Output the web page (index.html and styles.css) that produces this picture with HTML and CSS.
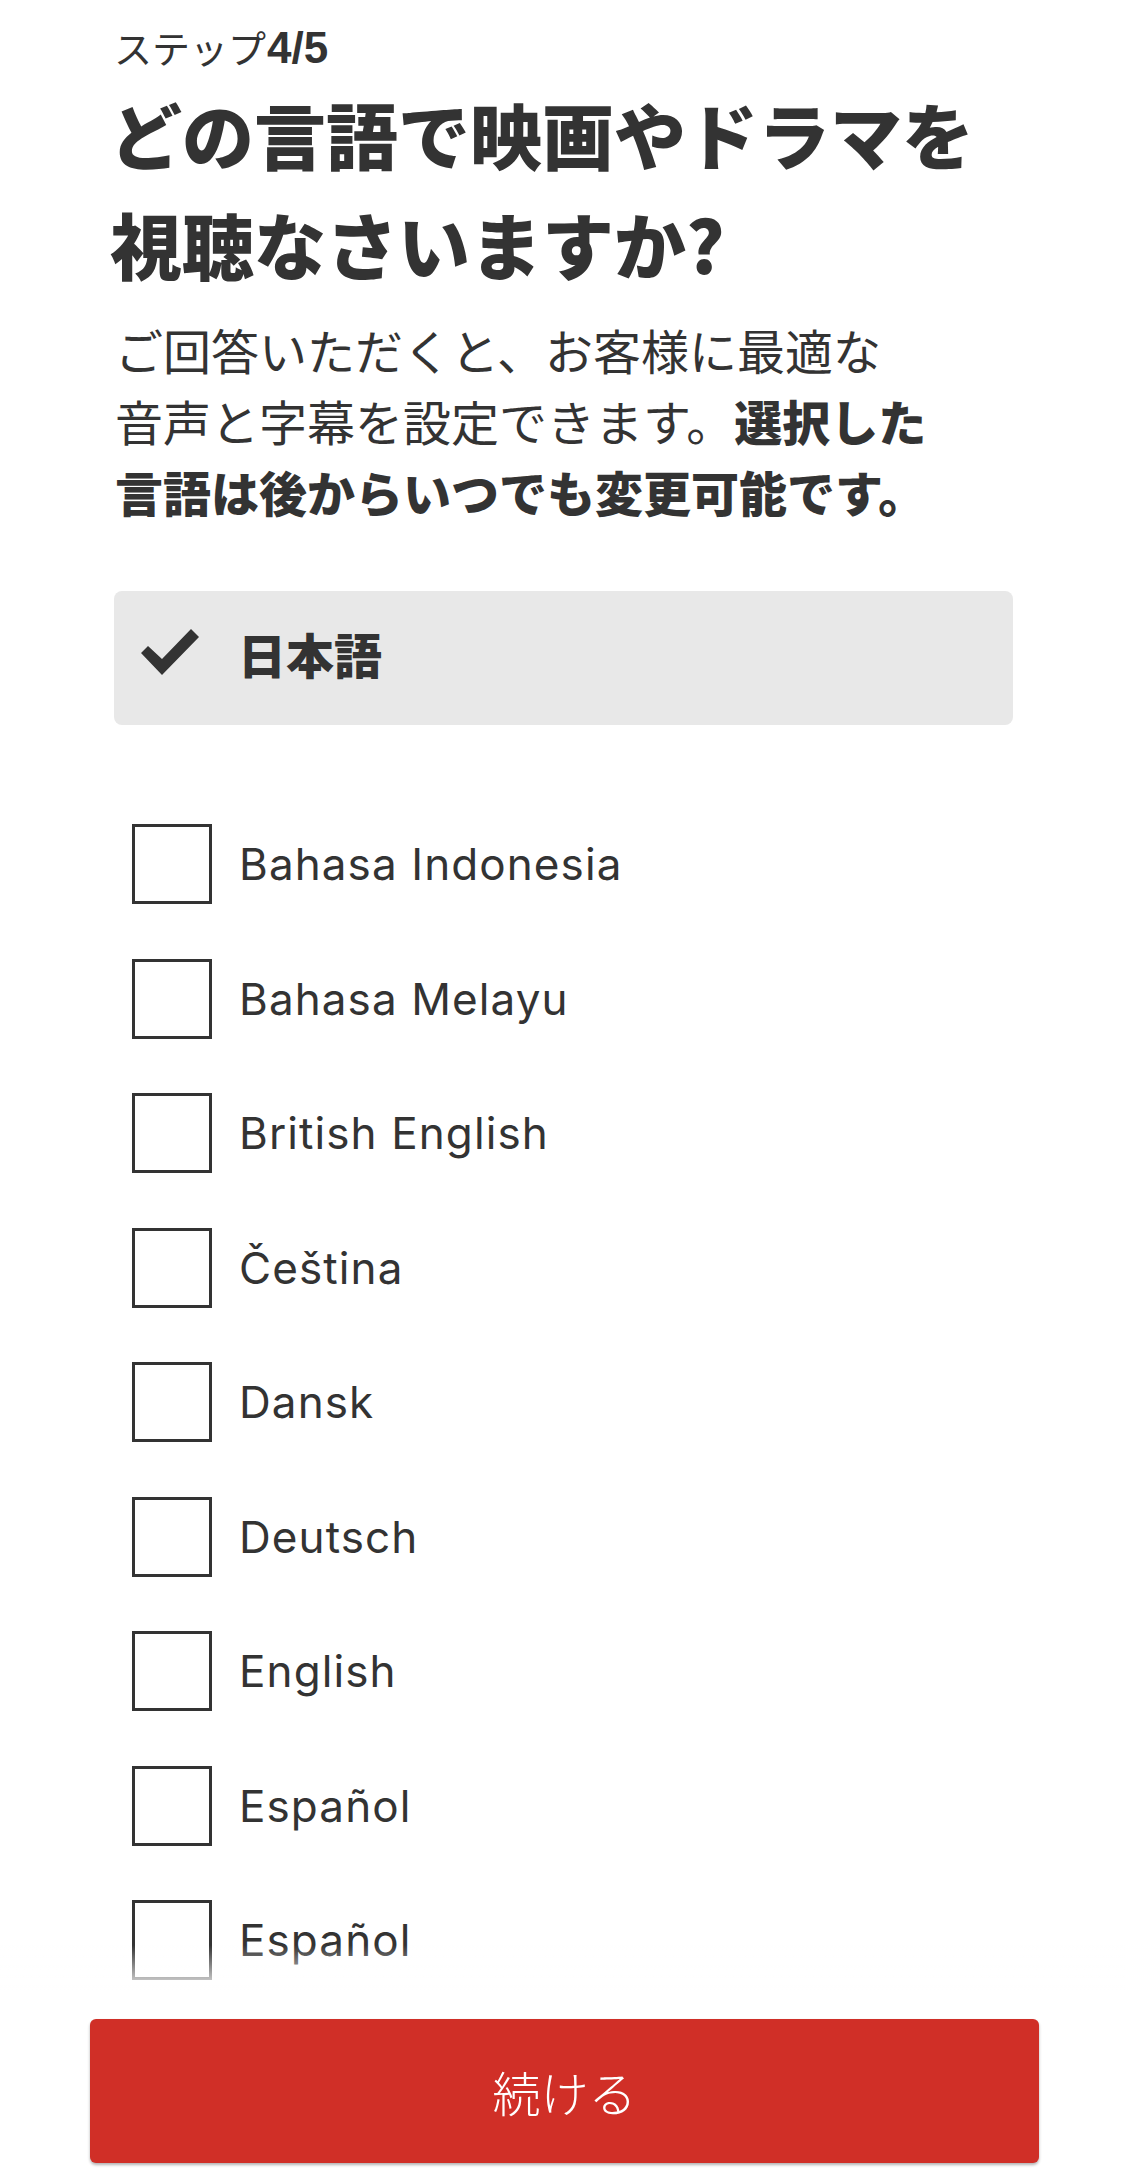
FILE: index.html
```html
<!DOCTYPE html>
<html lang="ja">
<head>
<meta charset="utf-8">
<title>言語の選択</title>
<link rel="stylesheet" href="styles.css">
</head>
<body>
<main class="page">
  <p class="step">ステップ<b>4/5</b></p>
  <h1 class="title">どの言語で映画やドラマを<br>視聴なさいますか?</h1>
  <p class="desc">ご回答いただくと、お客様に最適な<br>音声と字幕を設定できます。<strong>選択した<br>言語は後からいつでも変更可能です。</strong></p>

  <div class="selected">
    <svg class="check" viewBox="0 0 60 48" width="60" height="48" aria-hidden="true">
      <polygon points="1,25 8,18 22,31 51,1 59,9 22,47" fill="#333"/>
    </svg>
    <span class="selected-label">日本語</span>
  </div>

  <ul class="langs">
    <li class="lang"><span class="box"></span><span class="lang-name">Bahasa Indonesia</span></li>
    <li class="lang"><span class="box"></span><span class="lang-name">Bahasa Melayu</span></li>
    <li class="lang"><span class="box"></span><span class="lang-name">British English</span></li>
    <li class="lang"><span class="box"></span><span class="lang-name">Čeština</span></li>
    <li class="lang"><span class="box"></span><span class="lang-name">Dansk</span></li>
    <li class="lang"><span class="box"></span><span class="lang-name">Deutsch</span></li>
    <li class="lang"><span class="box"></span><span class="lang-name">English</span></li>
    <li class="lang"><span class="box"></span><span class="lang-name">Español</span></li>
    <li class="lang"><span class="box"></span><span class="lang-name">Español</span></li>
    <li class="lang"><span class="box"></span><span class="lang-name">Français</span></li>
  </ul>
</main>

<div class="footer">
  <button class="continue" type="button">続ける</button>
</div>
</body>
</html>
```

FILE: styles.css
```css
html, body {
  margin: 0;
  padding: 0;
  background: #fff;
  overflow: hidden;
}

body {
  color: #333;
  font-family: "Noto Sans CJK JP", "Noto Sans", sans-serif;
  height: 2174px;
}

.page {
  padding: 0 112px 0 114px;
}

.step {
  margin: 0;
  padding-top: 23px;
  font-size: 38px;
  line-height: 48px;
  font-weight: 400;
}

.step b {
  font-family: "Liberation Sans", "Noto Sans CJK JP", sans-serif;
  font-weight: 700;
  font-size: 44px;
  margin-left: 1px;
}

.title {
  margin: 6px 0 0 -4px;
  font-size: 72px;
  line-height: 110px;
  font-weight: 900;
  white-space: nowrap;
}

.desc {
  margin: 16px 0 0 1px;
  font-size: 48px;
  line-height: 71px;
  font-weight: 400;
}

.desc strong {
  font-weight: 900;
}

.selected {
  margin-top: 64px;
  height: 134px;
  background: #e8e8e8;
  border-radius: 8px;
  display: flex;
  align-items: center;
  padding-left: 26px;
  box-sizing: border-box;
}

.check {
  flex: none;
  margin-bottom: 12px;
}

.selected-label {
  margin-left: 38px;
  margin-bottom: 10px;
  font-size: 48px;
  font-weight: 900;
  line-height: 1;
}

.langs {
  list-style: none;
  margin: 99px 0 0 0;
  padding: 0 0 0 18px;
  display: flex;
  flex-direction: column;
  gap: 54.5px;
}

.lang {
  display: flex;
  align-items: center;
  height: 80px;
}

.box {
  flex: none;
  width: 80px;
  height: 80px;
  box-sizing: border-box;
  border: 3px solid #333;
}

.lang-name {
  margin-left: 27px;
  font-family: "Inter", "Noto Sans", sans-serif;
  font-size: 44px;
  letter-spacing: 1.1px;
  color: #333;
}

.footer {
  position: fixed;
  left: 0;
  right: 0;
  bottom: 0;
  padding: 74px 86px 11px 90px;
  background: linear-gradient(to bottom, rgba(255,255,255,0) 0, #fff 50px);
}

.continue {
  display: block;
  width: 100%;
  height: 144px;
  border: 0;
  border-radius: 6px;
  background: #d02f27;
  color: #fff;
  font-family: "Noto Sans CJK JP", sans-serif;
  font-size: 48px;
  font-weight: 300;
  box-shadow: 0 2px 3px rgba(0,0,0,0.3);
}
```
